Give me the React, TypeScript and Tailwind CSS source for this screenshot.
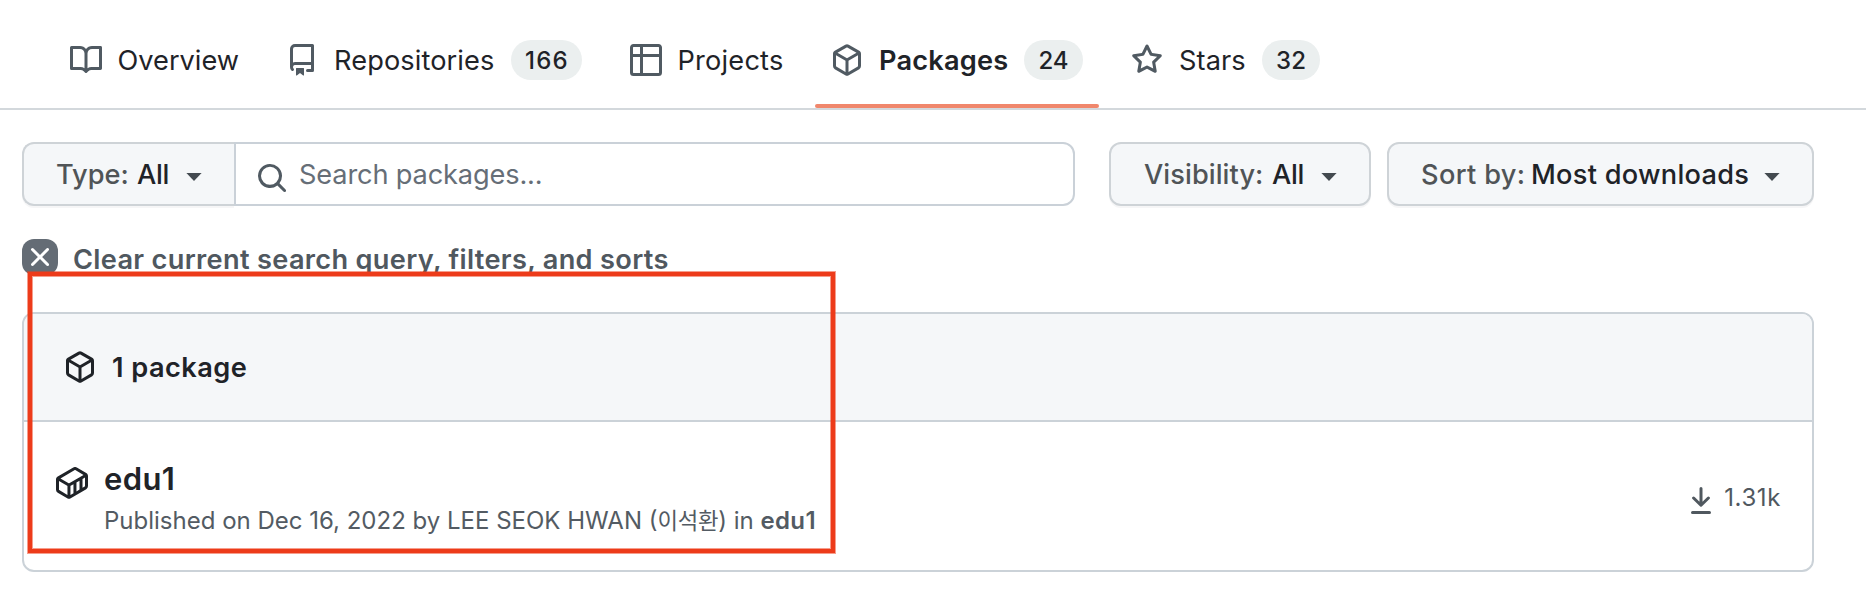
import type { ReactNode } from "react";

const paths = {
  book: "M0 1.75A.75.75 0 0 1 .75 1h4.253c1.227 0 2.317.59 3 1.501A3.743 3.743 0 0 1 11.006 1h4.245a.75.75 0 0 1 .75.75v10.5a.75.75 0 0 1-.75.75h-4.507a2.25 2.25 0 0 0-1.591.659l-.622.621a.75.75 0 0 1-1.06 0l-.622-.621A2.25 2.25 0 0 0 5.258 13H.75a.75.75 0 0 1-.75-.75Zm7.251 10.324.004-5.073-.002-2.253A2.25 2.25 0 0 0 5.003 2.5H1.5v9h3.757a3.75 3.75 0 0 1 1.994.574ZM8.755 4.75l-.004 7.322a3.752 3.752 0 0 1 1.992-.572H14.5v-9h-3.495a2.25 2.25 0 0 0-2.25 2.25Z",
  repo: "M2 2.5A2.5 2.5 0 0 1 4.5 0h8.75a.75.75 0 0 1 .75.75v12.5a.75.75 0 0 1-.75.75h-2.5a.75.75 0 0 1 0-1.5h1.75v-2h-8a1 1 0 0 0-.714 1.7.75.75 0 1 1-1.072 1.05A2.495 2.495 0 0 1 2 11.5Zm10.5-1h-8a1 1 0 0 0-1 1v6.708A2.486 2.486 0 0 1 4.5 9h8ZM5 12.25a.25.25 0 0 1 .25-.25h3.5a.25.25 0 0 1 .25.25v3.25a.25.25 0 0 1-.4.2l-1.45-1.087a.249.249 0 0 0-.3 0L5.4 15.7a.25.25 0 0 1-.4-.2Z",
  table: "M0 1.75C0 .784.784 0 1.75 0h12.5C15.216 0 16 .784 16 1.75v12.5A1.75 1.75 0 0 1 14.25 16H1.75A1.75 1.75 0 0 1 0 14.25ZM6.5 6.5v8h7.75a.25.25 0 0 0 .25-.25V6.5Zm8-1.5V1.75a.25.25 0 0 0-.25-.25H6.5V5Zm-13 1.5v7.75c0 .138.112.25.25.25H5v-8ZM5 5V1.5H1.75a.25.25 0 0 0-.25.25V5Z",
  cube: "m8.878.392 5.25 3.045c.54.314.872.89.872 1.514v6.098a1.75 1.75 0 0 1-.872 1.514l-5.25 3.045a1.75 1.75 0 0 1-1.756 0l-5.25-3.045A1.75 1.75 0 0 1 1 11.049V4.951c0-.624.332-1.201.872-1.514L7.122.392a1.75 1.75 0 0 1 1.756 0ZM7.875 1.69l-4.63 2.685L8 7.133l4.755-2.758-4.63-2.685a.248.248 0 0 0-.25 0ZM2.5 5.677v5.372c0 .09.047.171.125.216l4.625 2.683V8.432Zm6.25 8.271 4.625-2.683a.25.25 0 0 0 .125-.216V5.677L8.75 8.432Z",
  star: "M8 .25a.75.75 0 0 1 .673.418l1.882 3.815 4.21.612a.75.75 0 0 1 .416 1.279l-3.046 2.97.719 4.192a.751.751 0 0 1-1.088.791L8 12.347l-3.766 1.98a.75.75 0 0 1-1.088-.79l.72-4.194L.818 6.374a.75.75 0 0 1 .416-1.28l4.21-.611L7.327.668A.75.75 0 0 1 8 .25Zm0 2.445L6.615 5.5a.75.75 0 0 1-.564.41l-3.097.45 2.24 2.184a.75.75 0 0 1 .216.664l-.528 3.084 2.769-1.456a.75.75 0 0 1 .698 0l2.77 1.456-.53-3.084a.75.75 0 0 1 .216-.664l2.24-2.183-3.096-.45a.75.75 0 0 1-.564-.41L8 2.694Z",
  search: "M10.68 11.74a6 6 0 0 1-7.922-8.982 6 6 0 0 1 8.982 7.922l3.04 3.04a.749.749 0 0 1-.326 1.275.749.749 0 0 1-.734-.215ZM11.5 7a4.499 4.499 0 1 0-8.997 0A4.499 4.499 0 0 0 11.5 7Z",
  x: "M3.72 3.72a.75.75 0 0 1 1.06 0L8 6.94l3.22-3.22a.749.749 0 0 1 1.275.326.749.749 0 0 1-.215.734L9.06 8l3.22 3.22a.749.749 0 0 1-.326 1.275.749.749 0 0 1-.734-.215L8 9.06l-3.22 3.22a.751.751 0 0 1-1.042-.018.751.751 0 0 1-.018-1.042L6.94 8 3.72 4.78a.75.75 0 0 1 0-1.06Z",
  container:
    "m10.41.24 4.711 2.774c.544.316.878.897.879 1.526v5.01a1.77 1.77 0 0 1-.88 1.53l-7.753 4.521-.002.001a1.769 1.769 0 0 1-1.774 0H5.59L.873 12.85A1.761 1.761 0 0 1 0 11.327V6.292c0-.304.078-.598.22-.855l.004-.005.01-.019c.15-.262.369-.486.64-.643L8.641.239a1.752 1.752 0 0 1 1.765 0l.002.001ZM9.397 1.534l-7.17 4.182 4.116 2.388a.27.27 0 0 0 .269 0l7.152-4.148-4.115-2.422a.252.252 0 0 0-.252 0Zm-7.768 10.02 4.1 2.393V9.474a1.807 1.807 0 0 1-.138-.072L1.5 7.029v4.298c0 .095.05.181.129.227Zm8.6.642 1.521-.887v-4.45l-1.521.882ZM7.365 9.402h.001c-.044.026-.09.049-.136.071v4.472l1.5-.875V8.61Zm5.885 1.032 1.115-.65h.002a.267.267 0 0 0 .133-.232V5.264l-1.25.725Z",
};

function Icon({ name, className = "" }: { name: keyof typeof paths; className?: string }) {
  return (
    <svg viewBox="0 0 16 16" className={`size-8 shrink-0 fill-current ${className}`} aria-hidden="true">
      <path d={paths[name]} />
    </svg>
  );
}

function Caret() {
  return (
    <svg viewBox="0 0 16 8" className="mt-[5px] h-2 w-4 shrink-0 fill-[#434a50]" aria-hidden="true">
      <path d="M0.4 0H15.6L8 8Z" />
    </svg>
  );
}

function Tab({
  icon,
  label,
  count,
  selected,
  className,
  labelClass,
  countClass = "",
}: {
  icon: keyof typeof paths;
  label: string;
  count?: string;
  selected?: boolean;
  className: string;
  labelClass: string;
  countClass?: string;
}) {
  return (
    <a className={`relative flex items-center px-4 ${className}`}>
      <Icon name={icon} className="text-[#505a62]" />
      <span className={`pt-0.5 text-[27.2px] leading-10 whitespace-nowrap ${labelClass}`}>{label}</span>
      {count && (
        <span className={`ml-auto flex h-10 items-center justify-center rounded-full bg-[#ebefef] pt-0.5 text-2xl font-medium ${countClass}`}>
          {count}
        </span>
      )}
      {selected && <span className="absolute inset-x-0 bottom-0 h-1 rounded-sm bg-[#f0876c]" />}
    </a>
  );
}

function FilterButton({ label, value, className, labelClass, valueClass }: { label: string; value: string; className: string; labelClass: string; valueClass: string }) {
  return (
    <button className={`flex h-16 shrink-0 items-center border-2 border-[#ced3d7] bg-[#f5f7f9] text-left text-[27.2px] font-medium whitespace-nowrap shadow-[0_2px_0_rgba(31,35,40,0.04)] ${className}`}>
      <span className={`pt-0.5 text-[#505457] ${labelClass}`}>{label}</span>
      <span className={`pt-0.5 ${valueClass}`}>{value}</span>
      <Caret />
    </button>
  );
}

function Box({ children }: { children: ReactNode }) {
  return <section className="mt-[37px] h-[260px] overflow-hidden rounded-xl border-2 border-[#cbd2d8]">{children}</section>;
}

export default function App() {
  return (
    <div className="relative h-[594px] w-[1866px] overflow-hidden bg-white font-[Inter,'Noto_Sans_CJK_KR',sans-serif] text-[#1f2328]">
      <nav className="flex h-[110px] gap-4 border-b-2 border-[#d3d8dc] pt-3 pl-[54px]">
        <Tab icon="book" label="Overview" className="w-[200px]" labelClass="ml-[15.5px]" />
        <Tab icon="repo" label="Repositories" count="166" className="w-[328px]" labelClass="ml-4 tracking-[0.1px]" countClass="w-[71px] tracking-[1.2px] pl-px" />
        <Tab icon="table" label="Projects" className="w-[185px]" labelClass="ml-[15.5px] tracking-[0.2px]" />
        <Tab icon="cube" label="Packages" count="24" selected className="w-[284px]" labelClass="ml-4 font-semibold tracking-[0.2px]" countClass="w-[59px]" />
        <Tab icon="star" label="Stars" count="32" className="w-[221px]" labelClass="ml-4 tracking-[0.1px]" countClass="w-[58px]" />
      </nav>

      <main className="ml-[22px] w-[1792px] pt-8">
        <div className="flex">
          <FilterButton label="Type:" value="All" className="w-[212px] rounded-l-xl border-r-0 pl-8" labelClass="w-[81px]" valueClass="w-[49px] tracking-[-0.3px]" />
          <div className="flex h-16 w-[841px] items-center rounded-r-xl border-2 border-[#cad1d8] pl-5">
            <Icon name="search" className="mt-2 text-[#505a62]" />
            <span className="ml-[11px] pt-0.5 text-[27.2px] tracking-[-0.15px] text-[#666e77]">Search packages...</span>
          </div>
          <FilterButton label="Visibility:" value="All" className="ml-[34px] w-[262px] rounded-xl pl-[33px]" labelClass="w-[128px] tracking-[0.07px]" valueClass="w-[49px] tracking-[-0.3px]" />
          <FilterButton label="Sort by:" value="Most downloads" className="ml-4 w-[427px] rounded-xl pl-8" labelClass="w-[110px] tracking-[0.35px]" valueClass="w-[233px] tracking-[0.26px]" />
        </div>

        <a className="mt-[33px] flex h-9 items-center">
          <span className="flex size-9 shrink-0 items-center justify-center rounded-xl bg-[#646c75] text-white">
            <Icon name="x" />
          </span>
          <span className="mt-1.5 ml-[15px] text-[27.2px] font-semibold tracking-[0.31px] whitespace-nowrap text-[#50585f]">
            Clear current search query, filters, and sorts
          </span>
        </a>

        <Box>
          <header className="flex h-[108px] items-center border-b-2 border-[#cbd2d8] bg-[#f5f7f9] pl-10">
            <Icon name="cube" />
            <h2 className="ml-4 pt-0.5 text-[27.2px] font-semibold tracking-[0.44px]">1 package</h2>
          </header>
          <div className="flex h-[148px] pr-[31px] pl-8">
            <Icon name="container" className="mt-[45px]" />
            <div className="pt-[39px] pl-4">
              <h3 className="text-[31px] leading-9 font-semibold tracking-[0.4px]">edu1</h3>
              <p className="mt-1.5 text-2xl leading-9 whitespace-nowrap text-[#535b63]">
                Published on Dec 16, 2022 by LEE SEOK HWAN (<span className="text-[22.3px] leading-none tracking-[-0.3px]">이석환</span>) in{" "}
                <strong className="font-semibold tracking-[0.4px]">edu1</strong>
              </p>
            </div>
            <div className="ml-auto flex items-center text-[#50585f]">
              <svg viewBox="0 0 20 27" className="mt-[9px] h-[27px] w-5 fill-none stroke-current stroke-3" strokeLinecap="round" strokeLinejoin="round" aria-hidden="true">
                <path d="M10 1.5V18M2.6 11 10 18.3 17.4 11M1.5 25.4H18.5" />
              </svg>
              <span className="ml-[13px] pt-1 text-2xl tracking-[0.6px]">1.31k</span>
            </div>
          </div>
        </Box>
      </main>

      <div className="absolute top-[272px] left-[28px] h-[281px] w-[807px] border-4 border-[#ed3b1a] shadow-[0_0_0_1px_rgba(237,59,26,0.5),inset_0_0_0_1px_rgba(237,59,26,0.5)]" />
    </div>
  );
}
